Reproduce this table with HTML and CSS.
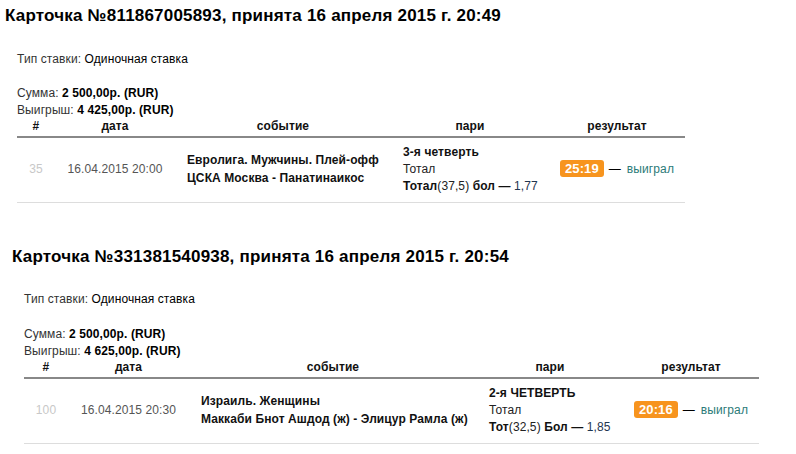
FILE: index.html
```html
<!DOCTYPE html>
<html lang="ru">
<head>
<meta charset="utf-8">
<title>Карточки</title>
<link rel="stylesheet" href="styles.css">
</head>
<body>
<section class="card card--a">
  <h2 class="card-title">Карточка №811867005893, принята 16 апреля 2015 г. 20:49</h2>
  <div class="card-body">
    <p class="bet-type"><span class="lbl">Тип ставки:</span> Одиночная ставка</p>
    <div class="sums">
      <div><span class="lbl">Сумма:</span> <b>2 500,00р. (RUR)</b></div>
      <div><span class="lbl">Выигрыш:</span> <b>4 425,00р. (RUR)</b></div>
    </div>
    <div class="tbl">
      <div class="thead">
        <div class="c-num">#</div>
        <div class="c-date">дата</div>
        <div class="c-event">событие</div>
        <div class="c-bet">пари</div>
        <div class="c-res">результат</div>
      </div>
      <div class="trow">
        <div class="c-num num">35</div>
        <div class="c-date date">16.04.2015 20:00</div>
        <div class="c-event event">
          <div>Евролига. Мужчины. Плей-офф</div>
          <div>ЦСКА Москва - Панатинаикос</div>
        </div>
        <div class="c-bet bet">
          <div class="bet-period">3-я четверть</div>
          <div class="bet-market">Тотал</div>
          <div class="bet-pick"><b>Тотал</b>(37,5) <b>бол</b> <b>—</b> <span class="odds">1,77</span></div>
        </div>
        <div class="c-res res">
          <span class="score">25:19</span><span class="dash">—</span><span class="won">выиграл</span>
        </div>
      </div>
    </div>
  </div>
</section>

<section class="card card--b">
  <h2 class="card-title">Карточка №331381540938, принята 16 апреля 2015 г. 20:54</h2>
  <div class="card-body">
    <p class="bet-type"><span class="lbl">Тип ставки:</span> Одиночная ставка</p>
    <div class="sums">
      <div><span class="lbl">Сумма:</span> <b>2 500,00р. (RUR)</b></div>
      <div><span class="lbl">Выигрыш:</span> <b>4 625,00р. (RUR)</b></div>
    </div>
    <div class="tbl">
      <div class="thead">
        <div class="c-num">#</div>
        <div class="c-date">дата</div>
        <div class="c-event">событие</div>
        <div class="c-bet">пари</div>
        <div class="c-res">результат</div>
      </div>
      <div class="trow">
        <div class="c-num num">100</div>
        <div class="c-date date">16.04.2015 20:30</div>
        <div class="c-event event">
          <div>Израиль. Женщины</div>
          <div>Маккаби Бнот Ашдод (ж) - Элицур Рамла (ж)</div>
        </div>
        <div class="c-bet bet">
          <div class="bet-period">2-я ЧЕТВЕРТЬ</div>
          <div class="bet-market">Тотал</div>
          <div class="bet-pick"><b>Тот</b>(32,5) <b>Бол</b> <b>—</b> <span class="odds">1,85</span></div>
        </div>
        <div class="c-res res">
          <span class="score">20:16</span><span class="dash">—</span><span class="won">выиграл</span>
        </div>
      </div>
    </div>
  </div>
</section>
</body>
</html>
```
FILE: styles.css
```css
* { box-sizing: border-box; }

html, body {
  margin: 0;
  padding: 0;
  background: #fff;
}

body {
  font-family: "Liberation Sans", Arial, sans-serif;
  font-size: 12px;
  letter-spacing: 0.1px;
  color: #000;
}

.card {
  padding-top: 7px;
}

.card--a {
  padding-left: 5px;
}

.card--b {
  margin-top: 38px;
  padding-left: 12px;
}

.card-title {
  margin: 0;
  font-size: 17px;
  line-height: 18px;
  letter-spacing: 0.2px;
  font-weight: bold;
  color: #000;
}

.card-body {
  padding-left: 12px;
}

.card--a .card-body {
  width: 680px;
}

.card--b .card-body {
  width: 747px;
}

.bet-type {
  margin: 25.5px 0 0;
  line-height: 17px;
}

.lbl {
  color: #333;
}

.sums {
  margin-top: 17.3px;
  line-height: 17px;
}

.sums b {
  font-weight: bold;
}

.thead,
.trow {
  display: grid;
  align-items: center;
}

.card--a .thead,
.card--a .trow {
  grid-template-columns: 38px 120px 216px 158px 136px;
}

.card--b .thead,
.card--b .trow {
  grid-template-columns: 44px 121px 288px 146px 136px;
}

.thead {
  font-weight: bold;
  color: #111;
  text-align: center;
  line-height: 14px;
  padding-bottom: 3px;
  border-bottom: 2px solid #888;
}

.trow {
  padding: 4.5px 0 6.5px;
  border-bottom: 1px solid #ddd;
}

.num {
  text-align: center;
  color: #c8c8c8;
}

.date {
  text-align: center;
  color: #555;
}

.event {
  padding-left: 12px;
  font-weight: bold;
  color: #111;
  line-height: 18px;
}

.bet {
  padding: 2px 0 0 12px;
  line-height: 17px;
  color: #222;
}

.bet-period {
  font-weight: bold;
  color: #111;
}

.bet-pick b {
  color: #111;
}

.odds {
  color: #1f3550;
}

.res {
  display: flex;
  justify-content: center;
  align-items: center;
  white-space: nowrap;
}

.score {
  display: inline-block;
  background: #f7941e;
  color: #fff;
  font-weight: bold;
  font-size: 13px;
  border-radius: 3px;
  padding: 0 5px;
  line-height: 17px;
}

.dash {
  color: #000;
  margin: 0 6px 0 5px;
}

.won {
  color: #2b7b78;
}
```
